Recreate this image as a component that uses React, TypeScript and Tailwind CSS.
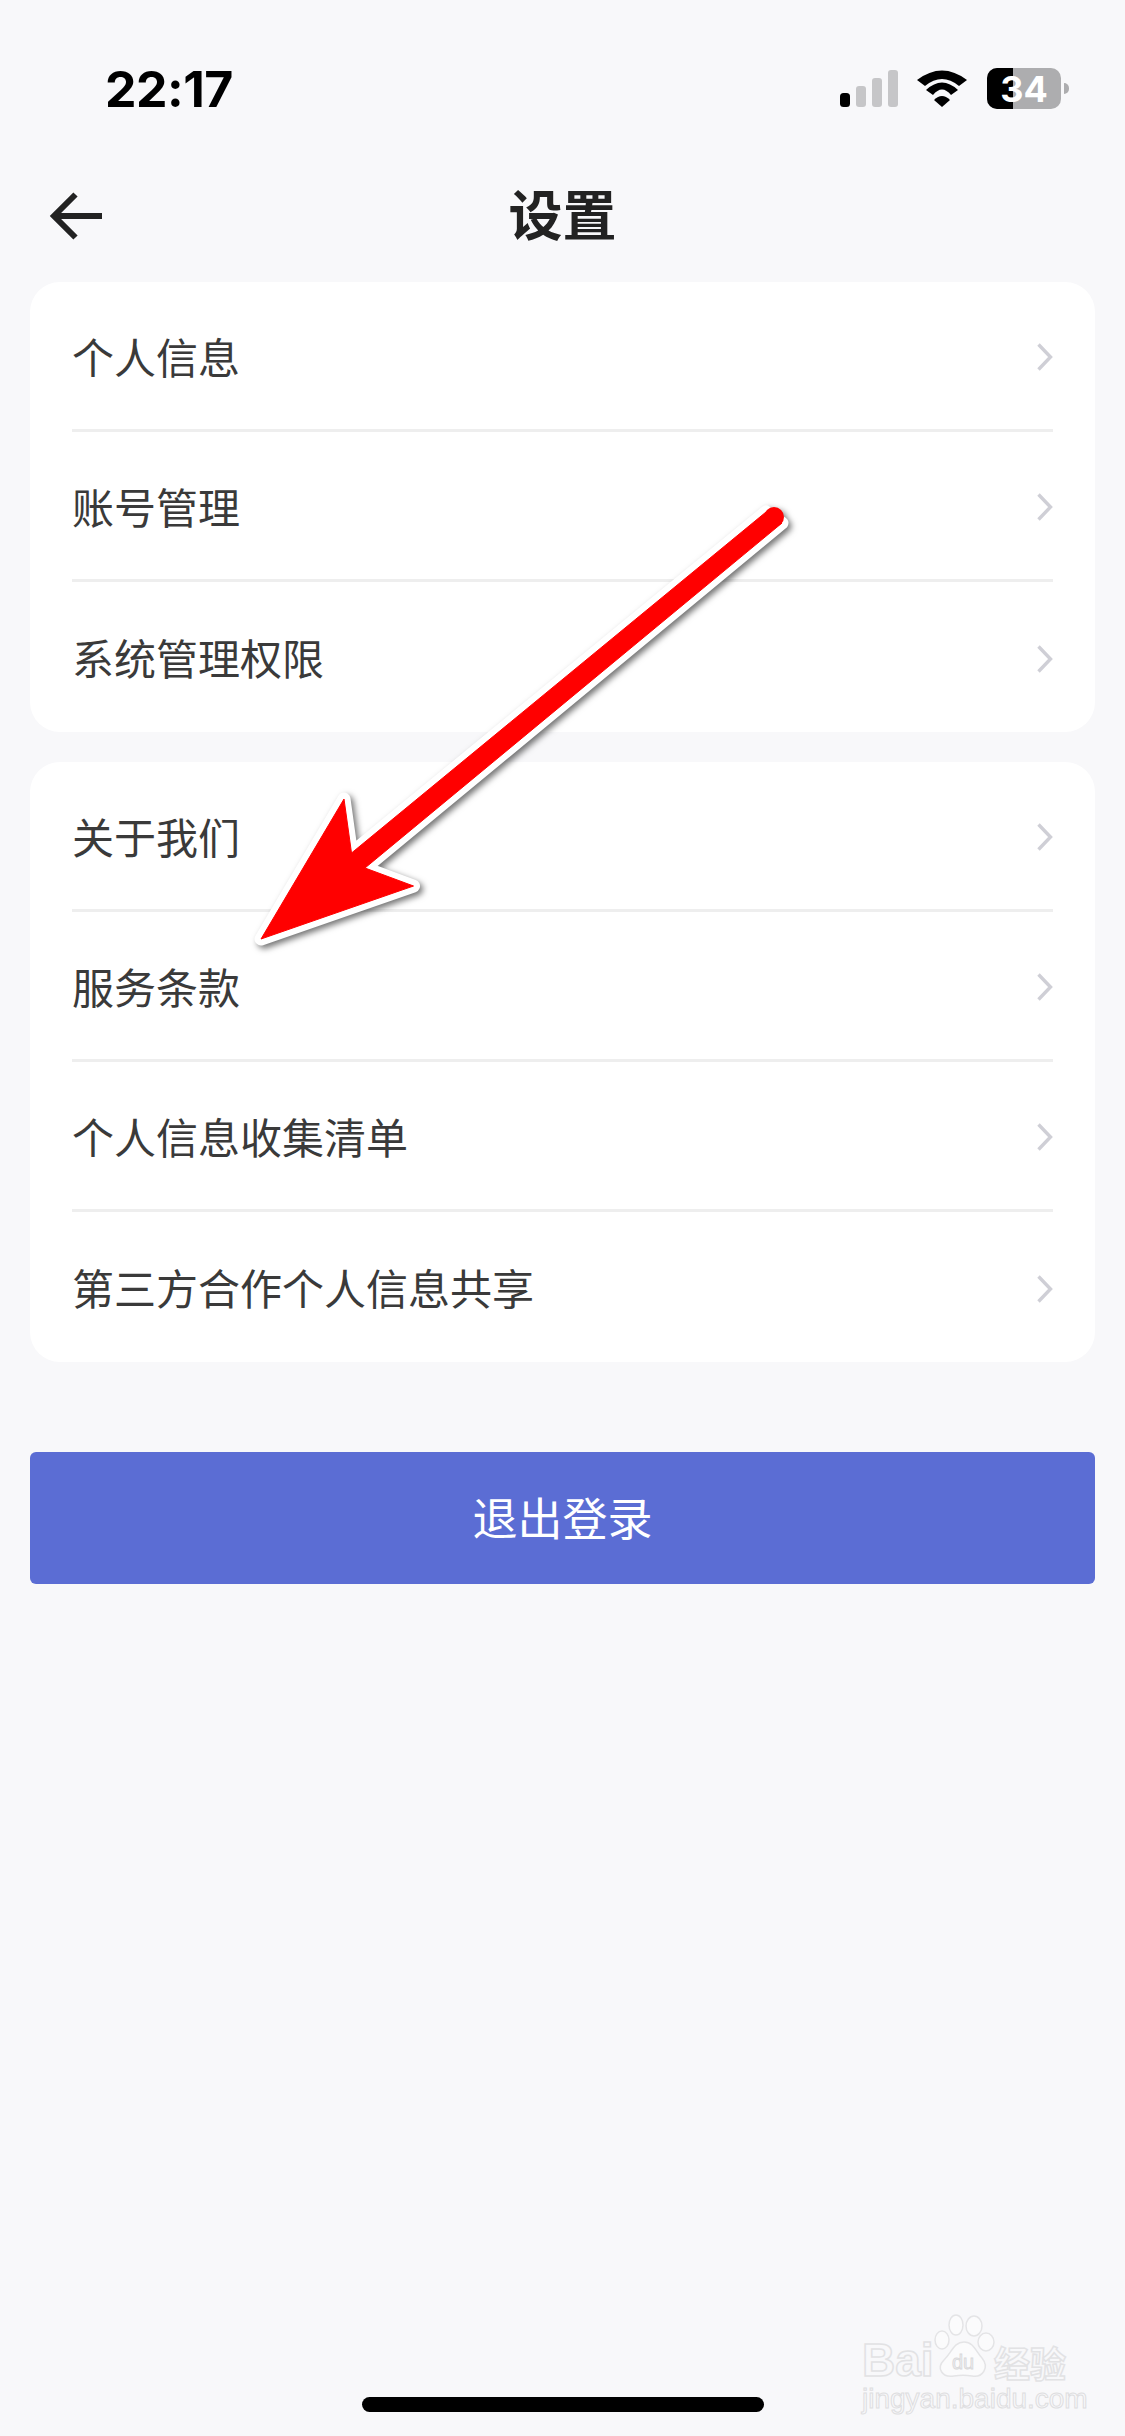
import React from 'react'

const groups = [
  ['个人信息', '账号管理', '系统管理权限'],
  ['关于我们', '服务条款', '个人信息收集清单', '第三方合作个人信息共享'],
]

function Chevron() {
  return (
    <svg width="16" height="28" viewBox="0 0 16 28" fill="none" className="mt-[3px] shrink-0">
      <path d="M1.5 1.5 L13.5 14 L1.5 26.5" stroke="#cfcfd6" strokeWidth="3.4" />
    </svg>
  )
}

function StatusBar() {
  return (
    <div className="relative h-[177px] shrink-0">
      <span className="absolute left-[105px] top-[59px] text-[50px] leading-[60px] font-bold tracking-[-0.5px] text-black font-['Inter',sans-serif]">22:17</span>
      <div className="absolute left-[840px] top-[68px] flex items-center">
        <svg width="58" height="41" viewBox="0 0 58 41" className="mr-[19px]">
          <rect x="0" y="25" width="10" height="14" rx="3.5" fill="#000" />
          <rect x="16" y="18" width="10" height="21" rx="3" fill="#c6c6c8" />
          <rect x="32" y="10" width="10" height="29" rx="3" fill="#c6c6c8" />
          <rect x="48" y="2" width="10" height="37" rx="3" fill="#c6c6c8" />
        </svg>
        <svg width="50" height="41" viewBox="0 0 50 41" className="mr-[20px]">
          <path d="M0 12 Q25 -7 50 12 L42 18 Q25 4 8 18 Z" fill="#000" />
          <path d="M9 22 Q25 7 41 22 L34 27 Q25 16 16 27 Z" fill="#000" />
          <path d="M17 32 Q25 24 33 32 L25 39 Z" fill="#000" />
        </svg>
        <div className="relative h-[41px] w-[74px] overflow-hidden rounded-[10px] bg-[#adadaf]">
          <div className="h-full w-[26px] bg-black" />
          <span className="absolute inset-0 flex items-center justify-center text-[36px] leading-none font-bold text-white font-['Inter',sans-serif]">34</span>
        </div>
        <div className="ml-[3px] h-[11px] w-[5px] rounded-r-full bg-[#adadaf]" />
      </div>
    </div>
  )
}

function Header() {
  return (
    <div className="relative flex h-[78px] shrink-0 items-center justify-center">
      <svg width="54" height="48" viewBox="0 0 54 48" fill="none" className="absolute left-[49px] top-[15px]">
        <path d="M53 24 H5" stroke="#222" strokeWidth="6" />
        <path d="M26.5 2.5 L5 24 L26.5 45.5" stroke="#222" strokeWidth="6" />
      </svg>
      <h1 className="mb-[6px] text-[54px] leading-[60px] font-bold text-[#222] font-['Noto_Sans_CJK_SC',sans-serif]">设置</h1>
    </div>
  )
}

function Row({ label, last }: { label: string; last: boolean }) {
  return (
    <div className={`flex h-[150px] items-center justify-between ${last ? '' : 'border-b-[3px] border-[#eeeeee]'}`}>
      <span className="text-[42px] leading-[56px] text-[#3a3a3a] font-['Noto_Sans_CJK_SC',sans-serif]">{label}</span>
      <Chevron />
    </div>
  )
}

function Arrow() {
  const pts = '261,939 344,799 351.5,853 766,512 782,523 365,868 413.5,886'
  return (
    <svg width="1125" height="1000" viewBox="0 0 1125 1000" className="pointer-events-none absolute left-0 top-0 drop-shadow-[3px_3px_3px_rgba(0,0,0,0.55)]">
      <polygon points={pts} fill="#fff" stroke="#fff" strokeWidth="13" strokeLinejoin="round" />
      <polygon points={pts} fill="#ff0000" stroke="#ff0000" strokeWidth="1" strokeLinejoin="round" />
      <circle cx="774" cy="517" r="10" fill="#ff0000" />
    </svg>
  )
}

function Watermark() {
  return (
    <div className="pointer-events-none absolute left-[860px] top-[2314px] h-[100px] w-[210px] text-white">
      <span className="absolute left-[2px] top-[20px] text-[46px] leading-[52px] font-bold text-[#f8f8fa] [-webkit-text-stroke:1.5px_#e2e2e4] font-['Liberation_Sans',sans-serif]">Bai</span>
      <svg width="64" height="66" viewBox="0 0 64 66" className="absolute left-[72px] top-0">
        <g fill="#fbfbfc" stroke="#e4e4e6" strokeWidth="1.5">
          <ellipse cx="10" cy="26" rx="7" ry="9" />
          <ellipse cx="24" cy="11" rx="7" ry="10" />
          <ellipse cx="42" cy="12" rx="8" ry="10" />
          <ellipse cx="54" cy="28" rx="8" ry="9" />
          <path d="M32 28 C42 28 44 38 50 44 C58 54 50 64 40 62 C34 61 28 61 22 62 C10 64 4 54 12 46 C20 38 22 28 32 28 Z" />
        </g>
        <text x="20" y="55" fontSize="20" fontFamily="Liberation Sans, sans-serif" fill="#eeeef0" stroke="#d8d8da" strokeWidth="0.8">du</text>
      </svg>
      <span className="absolute left-[134px] top-[26px] text-[36px] leading-[44px] font-bold text-[#f8f8fa] [-webkit-text-stroke:1.5px_#e2e2e4] font-['Noto_Sans_CJK_SC',sans-serif]">经验</span>
      <span className="absolute left-[2px] top-[68px] text-[28px] leading-[34px] text-[#f8f8fa] [-webkit-text-stroke:1px_#dedee0] font-['Liberation_Sans',sans-serif]">jingyan.baidu.com</span>
    </div>
  )
}

export default function App() {
  return (
    <div className="relative flex h-[2436px] w-[1125px] flex-col overflow-hidden bg-[#f8f8fa]">
      <StatusBar />
      <Header />
      <div className="mt-[27px] flex flex-col gap-[30px] px-[30px]">
        {groups.map((rows, i) => (
          <div key={i} className="rounded-[30px] bg-white px-[42px]">
            {rows.map((label, j) => (
              <Row key={label} label={label} last={j === rows.length - 1} />
            ))}
          </div>
        ))}
      </div>
      <button className="mx-[30px] mt-[90px] h-[132px] shrink-0 rounded-[6px] bg-[#5b6dd4] pb-[3px] text-[45px] text-white font-['Noto_Sans_CJK_SC',sans-serif]">退出登录</button>
      <div className="mt-auto mb-[24px] h-[15px] w-[402px] shrink-0 self-center rounded-full bg-black" />
      <Arrow />
      <Watermark />
    </div>
  )
}
